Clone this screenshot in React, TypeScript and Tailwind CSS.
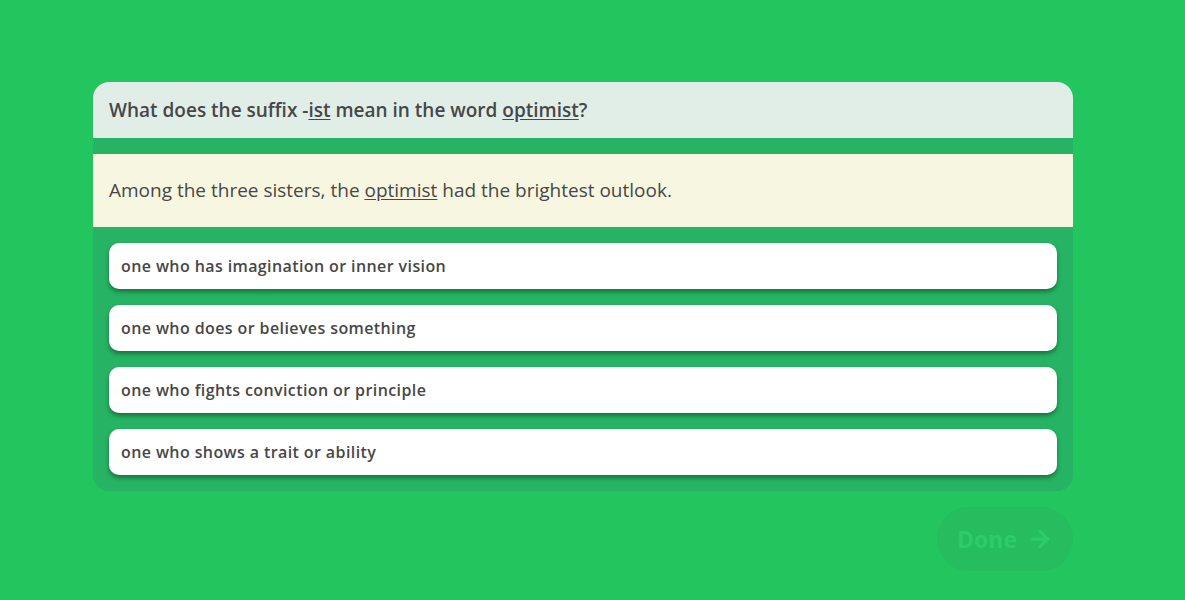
import { ArrowRight } from 'lucide-react';

const options = [
  'one who has imagination or inner vision',
  'one who does or believes something',
  'one who fights conviction or principle',
  'one who shows a trait or ability',
];

export default function App() {
  return (
    <div
      className="min-h-[600px] w-full bg-[#22c55e] pl-[93px] pt-[82px] text-[#474747]"
      style={{ fontFamily: '"Open Sans", "Liberation Sans", sans-serif' }}
    >
      <div className="flex w-[980px] flex-col overflow-hidden rounded-[16px] bg-[#26b363]">
        <div className="flex h-[56px] items-center bg-[#e1eee7] px-4 text-[19px] font-semibold">
          <span>
            What does the suffix -<span className="underline underline-offset-2">ist</span> mean in the
            word <span className="underline underline-offset-2">optimist</span>?
          </span>
        </div>
        <div className="mt-4 flex h-[73px] items-center bg-[#f7f6e1] px-4 text-[19px]">
          <span>
            Among the three sisters, the{' '}
            <span className="underline underline-offset-2">optimist</span> had the brightest outlook.
          </span>
        </div>
        <div className="flex flex-col gap-4 p-4">
          {options.map((o) => (
            <button
              key={o}
              className="flex h-[46px] items-center rounded-[10px] bg-white px-3 text-left text-[16px] font-semibold tracking-[0.4px] text-[#474747] shadow-[0_3px_4px_rgba(0,0,0,0.35)]"
            >
              {o}
            </button>
          ))}
        </div>
      </div>
      <div className="mt-4 flex w-[980px] justify-end">
        <button className="flex h-[64px] w-[136px] items-center justify-center gap-[10px] rounded-full bg-[#25bd5d] text-[23px] font-bold text-[#2ecb69]">
          Done
          <ArrowRight className="h-[26px] w-[26px]" strokeWidth={3} />
        </button>
      </div>
    </div>
  );
}
